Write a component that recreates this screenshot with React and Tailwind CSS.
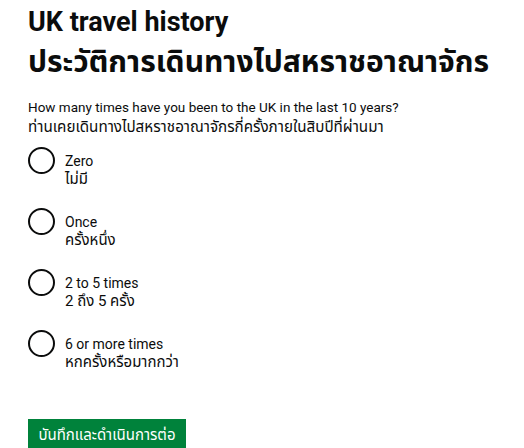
export default function App() {
  const options = [
    ["Zero", "ไม่มี"],
    ["Once", "ครั้งหนึ่ง"],
    ["2 to 5 times", "2 ถึง 5 ครั้ง"],
    ["6 or more times", "หกครั้งหรือมากกว่า"],
  ];
  return (
    <div className="bg-white min-h-[448px] px-[28px] pt-[4px] text-[#0b0c0c]" style={{ fontFamily: 'Roboto, "Noto Sans", "Noto Sans Thai", sans-serif' }}>
      <h1 className="text-[27px] font-bold leading-[36px]">UK travel history</h1>
      <h1 className="text-[30px] font-bold leading-[44px]">ประวัติการเดินทางไปสหราชอาณาจักร</h1>
      <p className="mt-[13px] text-[13.5px] leading-[20px]">
        How many times have you been to the UK in the last 10 years?
        <br />
        <span className="text-[15.2px]">ท่านเคยเดินทางไปสหราชอาณาจักรกี่ครั้งภายในสิบปีที่ผ่านมา</span>
      </p>
      <div className="mt-[10px] flex flex-col gap-[20px]">
        {options.map(([en, th]) => (
          <label key={en} className="flex items-start gap-[10px]">
            <span className="w-[27px] h-[27px] rounded-full border-2 border-[#0b0c0c] shrink-0" />
            <span className="text-[14px] leading-[18px] pt-[5px]">
              {en}
              <br />
              <span className="text-[15px]">{th}</span>
            </span>
          </label>
        ))}
      </div>
      <button className="mt-[48px] bg-[#00823b] text-white text-[15px] leading-[20px] pt-[6px] pb-[4px] shadow-[0_2px_0_#003618] w-[158px] text-center">
        บันทึกและดำเนินการต่อ
      </button>
    </div>
  );
}
